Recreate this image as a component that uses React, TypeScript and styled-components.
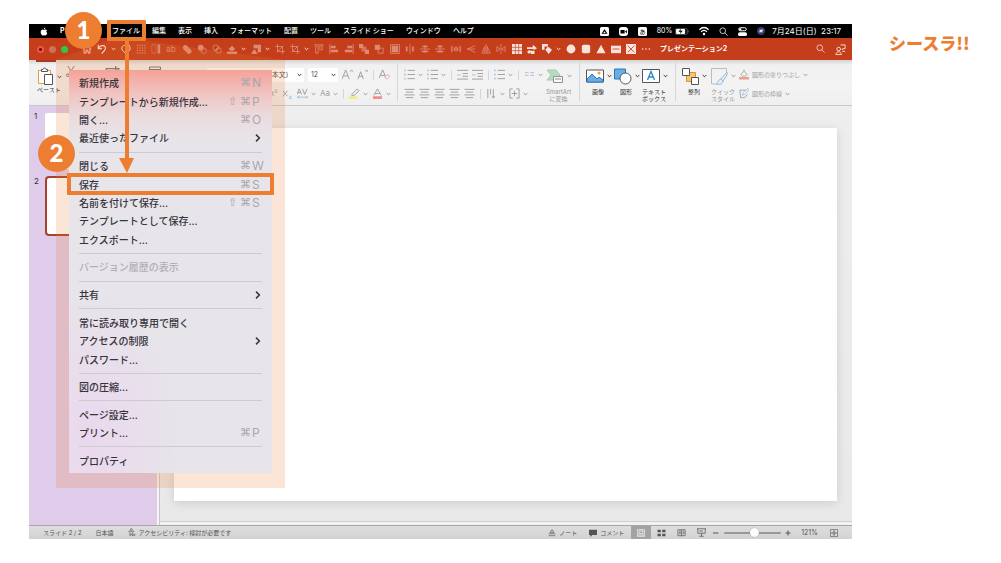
import React from "react";
import styled, { createGlobalStyle, css } from "styled-components";

const ORANGE = "#ed7d31";
const JP = `Inter, "Noto Sans CJK JP", "Noto Sans", sans-serif`;

const GlobalStyle = createGlobalStyle`
  *, *::before, *::after { box-sizing: border-box; }
  body { margin: 0; background: #fff; font-family: ${JP}; color: #333; }
  button, select, input { font: inherit; color: inherit; margin: 0; padding: 0; border: 0; background: none; }
  svg { display: block; flex: none; }
`;

const Page = styled.div`
  display: flex;
  min-height: 100vh;
  padding: 24px 0;
  padding-left: 29px;
`;

const Aside = styled.aside`
  flex: 0 0 149px;
  padding: 7px 0 0 37px;
`;

const Brand = styled.div`
  color: ${ORANGE};
  font-family: "Noto Sans CJK JP", sans-serif;
  font-size: 17px;
  font-weight: 900;
  line-height: 24px;
  white-space: nowrap;
`;

const Window = styled.main`
  position: relative;
  flex: 1;
  min-width: 0;
  display: flex;
  flex-direction: column;
`;

/* ---------- system menu bar ---------- */

const MenuBar = styled.header`
  display: flex;
  align-items: center;
  height: 14px;
  padding: 0 11px;
  background: #000;
  color: #fff;
  font-size: 7px;
  line-height: 14px;
  white-space: nowrap;
`;

const AppName = styled.strong`
  width: 6px;
  margin-left: 12px;
  margin-right: 46px;
  overflow: hidden;
`;

const MenuNames = styled.nav`
  display: flex;
  gap: 12px;
  font-weight: 500;
`;

const MenuName = styled.button`
  line-height: 14px;
  white-space: nowrap;
`;

const StatusItems = styled.div`
  display: flex;
  align-items: center;
  gap: 10px;
  margin-left: auto;
`;

const Battery = styled.span`
  display: flex;
  align-items: center;
  gap: 3px;
`;

const Clock = styled.time`
  margin-left: -3px;
  font-size: 8px;
`;

/* ---------- title bar ---------- */

const TitleBar = styled.div`
  display: flex;
  align-items: center;
  height: 22px;
  padding: 0 5px 0 8px;
  background: #c43e1c;
  color: #fff;
`;

const Lights = styled.div`
  display: flex;
  gap: 5px;
  width: 43px;
`;

const Light = styled.span<{ $color: string; $dot?: boolean }>`
  width: 7px;
  height: 7px;
  border-radius: 50%;
  background: ${(p) => (p.$dot ? `radial-gradient(#7a0b0b 25%, ${p.$color} 35%)` : p.$color)};
`;

const QuickTools = styled.div`
  display: flex;
  gap: 3px;
`;

const QuickGroup = styled.div`
  display: flex;
  align-items: center;
  gap: 2px;
`;

const QuickButton = styled.button<{ $dim?: boolean; $narrow?: boolean }>`
  display: flex;
  justify-content: center;
  width: ${(p) => (p.$narrow ? 7 : 13)}px;
  color: ${(p) => (p.$dim ? "#dd8a74" : "#fbe3dc")};
`;

const DocTitle = styled.h1`
  margin: 0 auto 0 8px;
  font-size: 7px;
  font-weight: 700;
  line-height: 14px;
  white-space: nowrap;
`;

const TitleActions = styled.div`
  display: flex;
  gap: 7px;
`;

/* ---------- ribbon ---------- */

const Ribbon = styled.section`
  display: flex;
  height: 46px;
  padding: 0 0 0 8px;
  background: linear-gradient(#d3d3d3, #f1f1f1 5px, #f3f3f3 60%, #efefef);
  border-bottom: 1px solid #c9c9c9;
  font-size: 6px;
  line-height: 7px;
  white-space: nowrap;
`;

const PasteGroup = styled.div`
  width: 29px;
  &::before {
    content: "";
    display: block;
    width: 20px;
    height: 2px;
    margin: 0 0 5px -1px;
    background: #a83a1e;
  }
`;

const HomeGroup = styled.div`
  display: flex;
  gap: 28px;
  width: 141px;
  padding-top: 6px;
  color: #777;
`;

const ToolRows = styled.div<{ $width: number }>`
  width: ${(p) => p.$width}px;
  padding-top: 7px;
  display: flex;
  flex-direction: column;
  gap: 4px;
  flex: none;
`;

const ToolRow = styled.div<{ $indent?: number }>`
  display: flex;
  align-items: center;
  gap: 4px;
  height: 15px;
  padding-left: ${(p) => p.$indent ?? 0}px;
`;

const Tool = styled.button<{ $dim?: boolean }>`
  display: flex;
  align-items: center;
  gap: 3px;
  opacity: ${(p) => (p.$dim ? 0.45 : 1)};
`;

const GlyphTool = styled(Tool)`
  font-size: 8px;
`;

const Picker = styled.span<{ $width: number }>`
  position: relative;
  width: ${(p) => p.$width}px;
  height: 14px;
  background: #fff;
  svg { position: absolute; right: 2px; top: 5px; pointer-events: none; }
`;

const PickerSelect = styled.select<{ $pad: number }>`
  appearance: none;
  width: 100%;
  height: 14px;
  padding-left: ${(p) => p.$pad}px;
  font-size: 7px;
  color: #555;
`;

const Divider = styled.span<{ $tall?: boolean }>`
  flex: none;
  width: 1px;
  height: ${(p) => (p.$tall ? 38 : 10)}px;
  margin: ${(p) => (p.$tall ? "3px 6px 0" : "0 1px")};
  background: #d6d6d6;
`;

const BigTool = styled.button<{ $dim?: boolean; $width: number }>`
  display: flex;
  flex-direction: column;
  align-items: flex-start;
  gap: 3px;
  width: ${(p) => p.$width}px;
  padding-top: 7px;
  opacity: ${(p) => (p.$dim ? 0.5 : 1)};
  text-align: center;
  line-height: 7px;
  flex: none;
`;

const BigTop = styled.span`
  display: flex;
  align-items: center;
  gap: 3px;
  height: 18px;
`;

const BigLabel = styled.span`
  min-width: 24px;
`;

/* ---------- document ---------- */

const Body = styled.div`
  flex: 1;
  display: flex;
`;

const Thumbs = styled.ol`
  flex: 0 0 128px;
  margin: 0;
  padding: 5px 0 0 5px;
  list-style: none;
  background: #dfccea;
`;

const ThumbItem = styled.li`
  display: flex;
  gap: 6px;
  height: 65px;
  font-size: 8px;
  line-height: 10px;
`;

const Thumb = styled.button<{ $active?: boolean }>`
  width: 106px;
  height: 60px;
  border-radius: 4px;
  background: #fff;
  background-clip: padding-box;
  border: 2px solid ${(p) => (p.$active ? "#a8402b" : "transparent")};
`;

const Canvas = styled.section`
  flex: 1;
  padding: 22px 15px 0;
  border-left: 2px solid #f5f5f5;
  background: linear-gradient(#eeeeee, #e9e9e9);
  box-shadow: inset 1px 0 #c8c8c8, inset 0 -3px #f2f2f2, inset 0 -4px #cfcfcf;
`;

const Slide = styled.div`
  aspect-ratio: 16 / 9;
  background: #fff;
  box-shadow: 0 2px 10px rgba(0, 0, 0, 0.12);
`;

const StatusBar = styled.footer`
  display: flex;
  align-items: center;
  height: 14px;
  padding: 0 12px 0 14px;
  border-top: 1px solid #a6a6a6;
  background: linear-gradient(#dedede, #d2d2d2);
  color: #555;
  font-size: 6px;
  line-height: 12px;
  white-space: nowrap;
`;

const StatusLeft = styled.div`
  display: flex;
  gap: 14px;
`;

const StatusRight = styled.div`
  display: flex;
  align-items: center;
  align-self: stretch;
  margin-left: auto;
`;

const StatusButton = styled.button<{ $gap?: number }>`
  display: flex;
  align-items: center;
  gap: 3px;
  margin-right: ${(p) => p.$gap ?? 0}px;
`;

const ViewButton = styled.button<{ $active?: boolean }>`
  display: flex;
  align-items: center;
  justify-content: center;
  align-self: stretch;
  width: 20px;
  ${(p) => p.$active && css`background: #a3a3a3; color: #fff;`}
`;

const ZoomLevel = styled(StatusButton)`
  font-size: 7px;
`;

const ZoomRange = styled.input`
  appearance: none;
  width: 57px;
  height: 2px;
  margin: 0 4px;
  background: #999;
  border-radius: 1px;
  &::-webkit-slider-thumb {
    appearance: none;
    width: 9px;
    height: 9px;
    border-radius: 50%;
    background: #fff;
    box-shadow: 0 0 1px #777;
  }
`;

/* ---------- opened file menu and call-outs ---------- */

const Highlight = styled.div`
  position: absolute;
  left: 27px;
  top: 36px;
  width: 229px;
  height: 428px;
  background: rgba(237, 125, 49, 0.2);
`;

const FileMenu = styled.div`
  position: absolute;
  left: 40px;
  top: 46px;
  width: 203px;
  height: 403px;
  display: flex;
  flex-direction: column;
  padding: 4px 10px 3px;
  background:
    linear-gradient(rgba(245, 158, 148, 0.95), rgba(244, 184, 178, 0.7) 25px, rgba(240, 200, 200, 0.3) 48px, rgba(232, 230, 234, 0) 72px),
    radial-gradient(ellipse 95px 160px at 20px 370px, #ead8ee, rgba(232, 230, 234, 0)),
    #e7e5ea;
`;

const Entry = styled.button`
  flex: 2 1 0;
  display: flex;
  align-items: center;
  justify-content: space-between;
  font-size: 10px;
  font-weight: 500;
  line-height: 14px;
  color: #37333a;
  white-space: nowrap;
  &:disabled { color: #b3afb6; }
`;

const Rule = styled.div`
  flex: 1 1 0;
  display: flex;
  align-items: center;
  &::before { content: ""; flex: 1; height: 1px; background: #cdcad0; }
`;

const Keys = styled.span`
  display: flex;
  color: #aaa6ac;
  font-weight: 400;
`;

const Key = styled.kbd<{ $letter?: boolean }>`
  width: ${(p) => (p.$letter ? 10 : 12)}px;
  font-family: ${(p) => (p.$letter ? "Inter, sans-serif" : `"DejaVu Sans", sans-serif`)};
  font-size: ${(p) => (p.$letter ? 12 : 11)}px;
  text-align: left;
`;

const Frame = styled.div<{ $x: number; $y: number; $w: number; $h: number }>`
  position: absolute;
  left: ${(p) => p.$x}px;
  top: ${(p) => p.$y}px;
  width: ${(p) => p.$w}px;
  height: ${(p) => p.$h}px;
  border: 4px solid ${ORANGE};
  border-radius: 1px;
  pointer-events: none;
`;

const Step = styled.div<{ $x: number; $y: number }>`
  position: absolute;
  left: ${(p) => p.$x}px;
  top: ${(p) => p.$y}px;
  width: 37px;
  height: 37px;
  border-radius: 50%;
  background: ${ORANGE};
  color: #fff;
  font-family: Lato, sans-serif;
  font-size: 24px;
  font-weight: 900;
  line-height: 36px;
  text-align: center;
`;

const Arrow = styled.svg`
  position: absolute;
  left: 27px;
  top: 14px;
  pointer-events: none;
`;

/* ---------- icons ---------- */

type IconProps = { w?: number; h?: number; box?: string; children: React.ReactNode };
const Icon = ({ w = 11, h = 11, box = "0 0 12 12", children }: IconProps) => (
  <svg width={w} height={h} viewBox={box} fill="none" stroke="currentColor" strokeWidth={1} aria-hidden="true">
    {children}
  </svg>
);
const Chevron = () => (
  <Icon w={5} h={4} box="0 0 5 4"><path d="M.7 1 2.5 2.8 4.3 1" /></Icon>
);
const solid = { fill: "currentColor", stroke: "none" };

const quick: Record<string, React.ReactNode> = {
  home: <path d="M1 6 6 1.5 11 6M2.5 5v6h2.3V7.5h2.4V11h2.3V5" />,
  undo: <path d="M1.5 1v4.500H6M1.8 5.2C4 1.500 8 1 9.600 3.200c1.500 2.300.2 4-4 8.300" strokeWidth={1.4} />,
  redo: <path d="M4.500 1.500C1 2 0 5.500 2 8l4 3.500L10 8c2-2.500 1-6-2.500-6.500M7.500 4.500v-3h3" strokeWidth={1.2} />,
  dots: <g {...solid}>{[1, 4, 7, 10].flatMap((x) => [1, 4, 7, 10].map((y) => <rect key={`${x}-${y}`} x={x} y={y} width="1.5" height="1.5" />))}</g>,
  guides: <><path d="M1 1h5v10H1z" strokeDasharray="1.5 1.2" /><path d="M8 .5h3v11H8z" {...solid} /></>,
  union: <path d="M1 4a3 3 0 0 1 5-2l4.500 4.500a3 3 0 0 1-4.300 4.300L2 6.500A3 3 0 0 1 1 4z" {...solid} />,
  combine: <><circle cx="4.500" cy="4.500" r="3.500" {...solid} /><circle cx="8" cy="8" r="3.300" /></>,
  fragment: <><circle cx="4.500" cy="4.500" r="3.300" /><circle cx="7.800" cy="7.800" r="3.300" /><path d="m3 9 6-6" /></>,
  fill: <><path d="M0 9h12v3H0z" {...solid} /><path d="m2 6 4-4 4 4-3 2H4zM6 2V0" {...solid} /></>,
  shape: <><path d="M3 1h9v9H8V5H3z" {...solid} /><path d="m0 12 4-6 4 6z" {...solid} /></>,
  crop: <path d="M3 0v9h9M0 3h9v9M2 10l8-8" />,
  top: <><path d="M0 1h12" /><path d="M2 2.500h3V11H2zM7 2.500h3V7H7z" /></>,
  left: <><path d="M1 0v12" /><path d="M2 2h6v3H2zM2 7h9v3H2z" {...solid} /></>,
  right: <><path d="M11 0v12" /><path d="M4 2h6v3H4zM1 7h9v3H1z" {...solid} /></>,
  front: <><path d="M0 0h5v5H0zM7 7h5v5H7z" {...solid} /><path d="M3 3h6v6H3z" {...solid} opacity=".7" /></>,
  back: <><path d="M1 1h6v6H1z" {...solid} /><path d="M5 5h6v6H5z" /></>,
  group: <><path d="M.5.5h11v11H.5z" /><path d="M2 2h8v8H2z" {...solid} /></>,
  midH: <><path d="M6 0v12" /><path d="M1 3h2v6H1zM8.500 3h2v6h-2zM3 6h6" {...solid} /></>,
  midV: <><path d="M0 6h12M6 1v10" /><path d="M3 2h6v2H3zM2 8h8v2H2z" {...solid} /></>,
  spread: <path d="M1 2v8M11 2v8M4 4v4M8 4v4M6 3v6" strokeWidth={1.4} />,
  branch: <path d="M11 2 2 6l9 4M1 6h10" />,
  flip: <path d="M6 0v12M4.500 3v8H1zM7.500 3v8H11z" />,
  mirror: <path d="M6 0v12M1 3l4 3-4 3zM11 3 7 6l4 3z" />,
  table: <><path d="M0 0h12v12H0z" {...solid} /><path d="M4 0v12M8 0v12M0 4h12M0 8h12" stroke="#c43e1c" strokeWidth=".8" /></>,
  smart: <><path d="M0 4h7V1l5 4-3 2-2-1H0zM3 8h6v4H5z" {...solid} /><circle cx="2.500" cy="9.500" r="2" {...solid} /></>,
  shapes: <><path d="M0 0h7v3H3v4H0z" {...solid} /><path d="m7 3 5 4-4 5-4-5z" {...solid} /></>,
  circle: <circle cx="6" cy="6" r="5.300" {...solid} />,
  square: <rect x="1" y="1" width="10" height="10" rx="2" {...solid} />,
  triangle: <path d="m6 1 5.500 10H.500z" {...solid} />,
  box: <><path d="M0 2h12v9H0z" {...solid} /><path d="M2 6h8" stroke="#c43e1c" /></>,
  cross: <><path d="M0 0h12v12H0z" {...solid} /><path d="m2 2 8 8M10 2l-8 8" stroke="#c43e1c" /></>,
  more: <g {...solid}><circle cx="2" cy="6" r="1" /><circle cx="6" cy="6" r="1" /><circle cx="10" cy="6" r="1" /></g>,
  ab: <text x="0" y="10" fontSize="10" fontFamily="Inter, sans-serif" {...solid}>ab</text>,
};

const quickGroups: { names: string[] }[] = [
  { names: ["home", "undo", "v", "redo", "dots", "guides", "ab"] },
  { names: ["union", "combine", "fragment", "fill", "v", "shape", "v", "crop", "crop", "v", "top", "left", "right", "front", "back"] },
  { names: ["group", "midH", "midV", "midV"] },
  { names: ["spread", "branch", "flip", "mirror"] },
  { names: ["table", "smart", "shapes", "v", "circle", "square", "triangle", "box", "cross", "more"] },
];
const brightQuick = new Set(["home", "undo", "redo", "table", "smart", "shapes", "circle", "square", "triangle", "box", "cross", "more"]);

const Lines = ({ rows = 4, bullets }: { rows?: number; bullets?: boolean }) => (
  <Icon>
    {Array.from({ length: rows }, (_, i) => {
      const y = 1.5 + (i * 9) / (rows - 1);
      return <path key={i} d={bullets ? `M4 ${y}h8` : `M${i % 2 ? 2 : 0.5} ${y}H${i % 2 ? 10 : 11.5}`} />;
    })}
    {bullets && <path d="M1 .500v12" stroke="#3f86c8" strokeWidth="1.500" strokeDasharray="2 2.500" />}
  </Icon>
);

const Search = () => <Icon w={9} h={9}><circle cx="5" cy="5" r="3.800" /><path d="m8 8 3.500 3.500" /></Icon>;

/* ---------- data ---------- */

const menuNames = ["ファイル", "編集", "表示", "挿入", "フォーマット", "配置", "ツール", "スライド ショー", "ウィンドウ", "ヘルプ"];

type MenuEntry = { label: string; keys?: string; sub?: boolean; off?: boolean } | null;
const entries: MenuEntry[] = [
  { label: "新規作成", keys: "⌘N" },
  { label: "テンプレートから新規作成...", keys: "⇧⌘P" },
  { label: "開く...", keys: "⌘O" },
  { label: "最近使ったファイル", sub: true },
  null,
  { label: "閉じる", keys: "⌘W" },
  { label: "保存", keys: "⌘S" },
  { label: "名前を付けて保存...", keys: "⇧⌘S" },
  { label: "テンプレートとして保存..." },
  { label: "エクスポート..." },
  null,
  { label: "バージョン履歴の表示", off: true },
  null,
  { label: "共有", sub: true },
  null,
  { label: "常に読み取り専用で開く" },
  { label: "アクセスの制限", sub: true },
  { label: "パスワード..." },
  null,
  { label: "図の圧縮..." },
  null,
  { label: "ページ設定..." },
  { label: "プリント...", keys: "⌘P" },
  null,
  { label: "プロパティ" },
];

const SystemBar = () => (
  <MenuBar>
    <Icon w={8} h={9}>
      <path d="M8 0c.1 1.500-1 2.700-2.300 2.700C5.600 1.300 6.700.200 8 0zM10.500 4C9 5 9.200 7.500 11 8.300 10.300 10.400 9 12 8 12c-.8 0-1-.5-2-.5S4.700 12 4 12C2.500 12 1 9 1 6.800 1 4.300 2.500 3 4 3c1 0 1.500.6 2.200.6S7.500 3 8.500 3c.8 0 1.500.4 2 1z" {...solid} />
    </Icon>
    <AppName>P</AppName>
    <MenuNames>{menuNames.map((n) => <MenuName key={n}>{n}</MenuName>)}</MenuNames>
    <StatusItems>
      <Icon w={9} h={9}><rect width="12" height="12" rx="2" {...solid} /><path d="M6 2.500 10 9H2z" fill="#000" stroke="none" /><path d="M6 5.500 7.500 8h-3z" {...solid} /></Icon>
      <Icon w={9} h={9}><rect width="12" height="12" rx="4" {...solid} /><path d="M2 4h5.500v4.500H2zM8 6l2.500-2v4.500z" fill="#000" stroke="none" /></Icon>
      <Icon w={9} h={9}><rect width="12" height="12" rx="2" {...solid} /><text x="2" y="9.500" fontSize="8" fontFamily="Noto Sans CJK JP, sans-serif" fill="#000" stroke="none">あ</text></Icon>
      <Battery>
        80%
        <Icon w={14} h={7} box="0 0 20 10"><rect x=".5" y=".5" width="17" height="9" rx="2.500" stroke="#777" /><rect x="1.500" y="1.500" width="13" height="7" rx="1.500" {...solid} /><path d="m8 1-3 4.500h3L7 9l4-5H8z" fill="#000" stroke="none" /><path d="M19 3.500v3" stroke="#777" /></Icon>
      </Battery>
      <Icon w={10} h={10}><path d="M.5 4.500c3.500-3.500 7.500-3.500 11 0M2.500 7c2.300-2.300 4.700-2.300 7 0" strokeWidth="1.500" /><circle cx="6" cy="9.500" r="1.500" {...solid} /></Icon>
      <Search />
      <Icon w={9} h={9}><rect x="1" y="1" width="10" height="4" rx="2" strokeWidth="1.300" /><rect x="0" y="7" width="12" height="5" rx="2.500" {...solid} /><circle cx="3" cy="3" r="1.500" {...solid} /></Icon>
      <Icon w={8} h={8}><circle cx="6" cy="6" r="5.500" fill="#27346b" stroke="#5b3f7a" /><path d="M2 8c2-5 5-5 8-4-1 4-4 5-8 4z" fill="#4cc9e8" stroke="none" /><path d="M3 4c3-2 5 1 6 4-3 1-6-1-6-4z" fill="#e95a8c" stroke="none" opacity=".8" /><circle cx="6" cy="6" r="1.500" {...solid} /></Icon>
      <Clock>7月24日(日)&nbsp; 23:17</Clock>
    </StatusItems>
  </MenuBar>
);

const DocumentBar = () => (
  <TitleBar>
    <Lights>
      <Light $color="#f4534c" $dot />
      <Light $color="#d0705a" />
      <Light $color="#2fc840" />
    </Lights>
    <QuickTools>
      {quickGroups.map((g, gi) => (
        <QuickGroup key={gi}>
          {g.names.map((n, i) => (
            <QuickButton key={i} $narrow={n === "v"} $dim={n !== "v" && !brightQuick.has(n)} aria-label={n}>
              {n === "v" ? <Chevron /> : <Icon w={10} h={10}>{quick[n]}</Icon>}
            </QuickButton>
          ))}
        </QuickGroup>
      ))}
    </QuickTools>
    <DocTitle>プレゼンテーション2</DocTitle>
    <TitleActions>
      <QuickButton aria-label="検索"><Search /></QuickButton>
      <QuickButton aria-label="共有">
        <Icon><circle cx="4" cy="5.500" r="2" /><path d="M1 11.500c0-4 6-4 6 0zM6 1h5v4H9L8 6.500V5M8 8h3" /></Icon>
      </QuickButton>
    </TitleActions>
  </TitleBar>
);

const RibbonBar = () => (
  <Ribbon>
    <PasteGroup>
      <Tool>
        <Icon w={17} h={19} box="0 0 17 19">
          <path d="M1.500 3.500h12v13h-12z" stroke="#e59a3c" fill="#fff" /><path d="M4.500 4.500V2.500h1.500a1.500 1.500 0 0 1 3 0h1.500v2z" fill="#fff" stroke="#555" /><path d="M7.500 7.500h8v10h-8z" fill="#fff" stroke="#555" />
        </Icon>
        <Chevron />
      </Tool>
      <div>ペースト</div>
    </PasteGroup>
    <HomeGroup>
      <Icon><path d="m2 0 6 9M9 0 3 9" /><circle cx="2" cy="10" r="1.500" /><circle cx="9" cy="10" r="1.500" /></Icon>
      <Icon w={16} h={16}><path d="M1 2h9v8H1zM8 0v5M6 2h5" /></Icon>
      <Icon w={12} h={12}><path d="M.5 1h11v10H.5zM.5 3.500h11M4 4v7" /></Icon>
    </HomeGroup>
    <ToolRows $width={184}>
      <ToolRow>
        <Picker $width={97}>
          <PickerSelect $pad={7} aria-label="フォント"><option>游ゴシック Light (本文)</option></PickerSelect>
          <Chevron />
        </Picker>
        <Picker $width={30}>
          <PickerSelect $pad={3} aria-label="フォント サイズ"><option>12</option></PickerSelect>
          <Chevron />
        </Picker>
        <Tool $dim aria-label="拡大"><Icon><path d="m0 11 4-10 4 10M1.500 7.500h5M9 3l1.500-2L12 3" /></Icon></Tool>
        <Tool $dim aria-label="縮小"><Icon><path d="m1 11 3-8 3 8M2 8h4M9 1l1.500 2L12 1" /></Icon></Tool>
        <Divider />
        <Tool $dim aria-label="書式のクリア"><Icon><path d="m0 10 4-9 3 7M1.500 7h5" /><path d="m6 9 3-3 3 2-3 3z" stroke="#b050b0" /></Icon></Tool>
      </ToolRow>
      <ToolRow $indent={63}>
        <GlyphTool $dim>x²</GlyphTool>
        <Tool $dim aria-label="下付き"><Icon><path d="m1 3 5 6M6 3 1 9" /><path d="M8 9h2l-2 2.500h2.500" stroke="#3f86c8" /></Icon></Tool>
        <Tool $dim aria-label="文字間隔"><Icon><path d="m0 7 2.500-6L5 7M1 5h3M6 1l2.500 6L11 1" /><path d="M0 10h12M2 8.500.5 10 2 11.500M10 8.500l1.500 1.500-1.500 1.500" stroke="#3f86c8" /></Icon><Chevron /></Tool>
        <GlyphTool $dim>Aa<Chevron /></GlyphTool>
        <Divider />
        <Tool $dim aria-label="蛍光ペン"><Icon><path d="m3 7 6-6 2 2-5 5H3z" /><path d="M0 10.500h9" stroke="#f2e800" strokeWidth="3" /></Icon><Chevron /></Tool>
        <Tool $dim aria-label="フォントの色"><Icon><path d="m2 8 4-7 4 7M3.500 6h5" /><path d="M1 10.500h10" stroke="#e81c1c" strokeWidth="3" /></Icon><Chevron /></Tool>
      </ToolRow>
    </ToolRows>
    <Divider $tall />
    <ToolRows $width={142}>
      <ToolRow>
        <Tool $dim aria-label="箇条書き"><Lines rows={3} bullets /><Chevron /></Tool>
        <Tool $dim aria-label="段落番号"><Lines rows={3} bullets /><Chevron /></Tool>
        <Divider />
        <Tool $dim aria-label="インデントを減らす"><Icon><path d="M0 1.500h12M6 5h6M6 8h6M0 11h12" /><path d="M4 6.500H0" stroke="#3f86c8" /></Icon></Tool>
        <Tool $dim aria-label="インデントを増やす"><Icon><path d="M0 1.500h12M6 5h6M6 8h6M0 11h12" /><path d="M4 6.500H0" stroke="#3f86c8" /></Icon></Tool>
        <Divider />
        <Tool $dim aria-label="行間"><Lines rows={3} bullets /><Chevron /></Tool>
        <Divider />
        <Tool $dim aria-label="段組み"><Icon><path d="M1 4h4M7 4h4M1 7h4M7 7h4" stroke="#3f86c8" /></Icon><Chevron /></Tool>
      </ToolRow>
      <ToolRow>
        {["左揃え", "中央揃え", "右揃え", "両端揃え", "均等割り付け"].map((l) => (
          <Tool key={l} $dim aria-label={l}><Lines /></Tool>
        ))}
        <Divider />
        <Tool $dim aria-label="文字列の方向"><Icon><path d="M2 1v10M5 1v6M8 1v10M6.500 9 8 11l1.500-2" /></Icon><Chevron /></Tool>
        <Tool $dim aria-label="文字の配置"><Icon><path d="M4 1H1v10h3M8 1h3v10H8M3 6h6M6 3v6" /></Icon><Chevron /></Tool>
      </ToolRow>
    </ToolRows>
    <BigTool $dim $width={27}>
      <BigTop>
        <Icon w={18} h={15} box="0 0 18 15"><path d="M1 1h9l4 5-4 5H1l4-5z" fill="#7fc58d" stroke="#5aa96a" /><path d="M7.500 7.500h9v6h-9z" fill="#fff" /><path d="M9 10h6" /></Icon>
        <Chevron />
      </BigTop>
      <BigLabel>SmartArt<br />に変換</BigLabel>
    </BigTool>
    <Divider $tall />
    <BigTool $width={28}>
      <BigTop>
        <Icon w={18} h={14} box="0 0 18 14"><path d="M.5 1h17v12H.5z" fill="#fff" stroke="#555" /><path d="m1 10 5-5 5 5 2-2 4 3v2H1z" fill="#69afe5" stroke="#2878bd" /><circle cx="13" cy="4" r="1.500" fill="#f0a030" stroke="none" /></Icon>
        <Chevron />
      </BigTop>
      <BigLabel>画像</BigLabel>
    </BigTool>
    <BigTool $width={28}>
      <BigTop>
        <Icon w={18} h={17} box="0 0 18 17"><path d="M.5 1h11v10H.5z" fill="#69afe5" stroke="#2878bd" /><circle cx="11.500" cy="10.500" r="5.500" fill="#fff" stroke="#555" /></Icon>
        <Chevron />
      </BigTop>
      <BigLabel>図形</BigLabel>
    </BigTool>
    <BigTool $width={27}>
      <BigTop>
        <Icon w={18} h={14} box="0 0 18 14"><path d="M.5.5h17v13H.5z" fill="#fff" stroke="#555" /><path d="m5.500 11 3.500-8.500L12.500 11M6.800 8h4.500" stroke="#2485cf" strokeWidth="1.300" /></Icon>
        <Chevron />
      </BigTop>
      <BigLabel>テキスト<br />ボックス</BigLabel>
    </BigTool>
    <Divider $tall />
    <BigTool $width={29}>
      <BigTop>
        <Icon w={17} h={17} box="0 0 17 17"><path d="M4.500 4.500h9v9h-9z" fill="#f8c66a" stroke="#dd932c" /><path d="M.5.500h7v7h-7zM9.500 9.500h7v7h-7z" fill="#fff" stroke="#555" /></Icon>
        <Chevron />
      </BigTop>
      <BigLabel>整列</BigLabel>
    </BigTool>
    <BigTool $dim $width={28}>
      <BigTop>
        <Icon w={17} h={17} box="0 0 17 17"><path d="M6 16H.5V.5h15V6" stroke="#888" /><path d="m16 4-6 7 2 2 4-6zM10 11c-3 0-2 4-5 5 4 1 7 0 7-3" fill="#dceaf5" stroke="#3f86c8" /></Icon>
        <Chevron />
      </BigTop>
      <BigLabel>クイック<br />スタイル</BigLabel>
    </BigTool>
    <ToolRows $width={90}>
      <ToolRow>
        <Tool $dim>
          <Icon w={10}><path d="m2 6 4-4 4 4-3 2H4zM6 2V0" /><path d="M0 10.500h12" stroke="#e03c20" strokeWidth="3" /></Icon>
          図形の塗りつぶし<Chevron />
        </Tool>
      </ToolRow>
      <ToolRow>
        <Tool $dim>
          <Icon w={10}><path d="M8 2H1l1 9h5l3-4" /><path d="m4 8 1-3 6-5 1 2-5 5z" stroke="#3f86c8" /></Icon>
          図形の枠線<Chevron />
        </Tool>
      </ToolRow>
    </ToolRows>
  </Ribbon>
);

const Status = () => (
  <StatusBar>
    <StatusLeft>
      <span>スライド 2 / 2</span>
      <span>日本語</span>
      <StatusButton>
        <Icon w={8} h={9}><circle cx="5" cy="1.500" r="1.300" /><path d="M1 4h8L7 6v5L5 8l-2 3V6zM8 8l3 3M11 8l-3 3" /></Icon>
        アクセシビリティ: 検討が必要です
      </StatusButton>
    </StatusLeft>
    <StatusRight>
      <StatusButton $gap={12}><Icon w={8} h={8}><path d="M1 7h10M1 10h10M3 5l3-4 3 4z" /></Icon>ノート</StatusButton>
      <StatusButton $gap={7}><Icon w={8} h={8}><path d="M0 1h12v8H5l-3 3V9H0z" {...solid} /></Icon>コメント</StatusButton>
      <ViewButton $active aria-label="標準"><Icon w={8} h={8}><path d="M.5 1h11v10H.5zM3 3h6v4H3zM1 9h10" /></Icon></ViewButton>
      <ViewButton aria-label="一覧"><Icon w={9} h={8}><path d="M0 1h5v4H0zM7 1h5v4H7zM0 7h5v4H0zM7 7h5v4H7z" {...solid} /></Icon></ViewButton>
      <ViewButton aria-label="閲覧"><Icon w={9} h={8}><path d="M.5 1h11v9H.5zM6 1v10M2 3h3M2 5h3M2 7h3M7.500 3h3M7.500 5h3M7.500 7h3" /></Icon></ViewButton>
      <ViewButton aria-label="スライド ショー"><Icon w={9} h={9}><path d="M0 1h12M1 1v6h10V1M6 7v4M3 11h6M3 4h5" /></Icon></ViewButton>
      <StatusButton $gap={1} aria-label="縮小"><Icon w={8} h={8}><path d="M3 6h8" strokeWidth="1.500" /></Icon></StatusButton>
      <ZoomRange type="range" min="10" max="230" defaultValue="128" aria-label="ズーム" />
      <StatusButton $gap={10} aria-label="拡大"><Icon w={6} h={6}><path d="M1 6h10M6 1v10" strokeWidth="2" /></Icon></StatusButton>
      <ZoomLevel $gap={12}>121%</ZoomLevel>
      <StatusButton $gap={2} aria-label="合わせる"><Icon w={8} h={8}><path d="M.5.500h11v11H.5zM6 1v3M6 8v3M1 6h3M8 6h3M4.500 4.500h3v3h-3z" /></Icon></StatusButton>
    </StatusRight>
  </StatusBar>
);

export default function App() {
  return (
    <Page>
      <GlobalStyle />
      <Window>
        <SystemBar />
        <DocumentBar />
        <RibbonBar />
        <Body>
          <Thumbs>
            <ThumbItem>1<Thumb aria-label="スライド 1" /></ThumbItem>
            <ThumbItem>2<Thumb $active aria-label="スライド 2" /></ThumbItem>
          </Thumbs>
          <Canvas><Slide /></Canvas>
        </Body>
        <Status />

        <Highlight />
        <FileMenu role="menu">
          {entries.map((e, i) =>
            e === null ? (
              <Rule key={i} />
            ) : (
              <Entry key={i} role="menuitem" disabled={e.off}>
                {e.label}
                {e.keys && (
                  <Keys>
                    {[...e.keys].map((k) => <Key key={k} $letter={k < "a"}>{k}</Key>)}
                  </Keys>
                )}
                {e.sub && <Icon w={9} h={10}><path d="m4 1.500 4.500 4.500L4 10.500" strokeWidth="2" /></Icon>}
              </Entry>
            )
          )}
        </FileMenu>

        <Arrow width="229" height="136" viewBox="0 0 229 136">
          <path d="M51 3h39l139 19H0z" fill={ORANGE} opacity=".18" />
          <path d="M69 3h4v118h-4z" fill={ORANGE} />
          <path d="M63 120h15l-7 15z" fill={ORANGE} />
        </Arrow>
        <Frame $x={78} $y={-4} $w={39} $h={21} />
        <Frame $x={38} $y={149} $w={207} $h={22} />
        <Step $x={36} $y={-12}>1</Step>
        <Step $x={9} $y={111}>2</Step>
      </Window>
      <Aside><Brand>シースラ!!</Brand></Aside>
    </Page>
  );
}
